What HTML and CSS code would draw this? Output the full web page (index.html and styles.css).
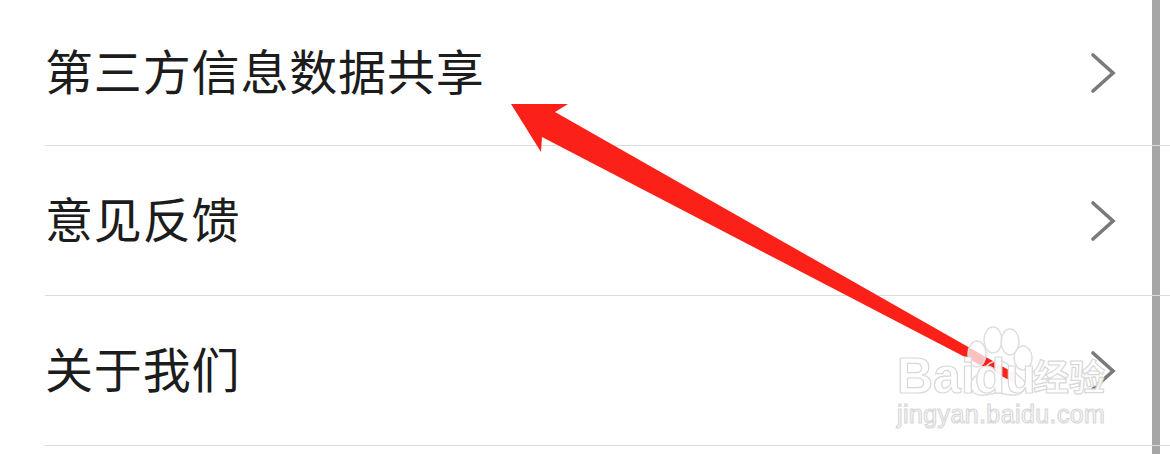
FILE: index.html
```html
<!DOCTYPE html>
<html lang="zh-CN">
<head>
<meta charset="utf-8">
<title>设置</title>
<link rel="stylesheet" href="styles.css">
</head>
<body>
<div class="page">
  <ul class="list">
    <li class="row row-first"><span class="label">第三方信息数据共享</span><svg class="chev" viewBox="0 0 30 44"><path d="M5 4 L25 22 L5 40"/></svg></li>
    <li class="row"><span class="label">意见反馈</span><svg class="chev" viewBox="0 0 30 44"><path d="M5 4 L25 22 L5 40"/></svg></li>
    <li class="row"><span class="label">关于我们</span><svg class="chev" viewBox="0 0 30 44"><path d="M5 4 L25 22 L5 40"/></svg></li>
  </ul>
  <div class="scrollbar"></div>
  <svg class="arrow" viewBox="0 0 1170 454"><polygon points="511,104 568,104 555,112 1014,373 1013,382 542,137 541,152"/></svg>
  <div class="watermark">
    <svg class="paw" viewBox="0 0 1170 454">
      <ellipse class="toe" cx="977" cy="354" rx="9" ry="13"/>
      <ellipse class="toe" cx="993" cy="340" rx="9" ry="13"/>
      <ellipse class="toe" cx="1010" cy="342" rx="9" ry="13"/>
      <ellipse class="toe" cx="1023" cy="358" rx="9" ry="12"/>
      <path class="pad" d="M998 361 C1010 361 1014 373 1021 378 C1029 384 1025 395 1013 395 C1005 395 1002 393 998 393 C992 393 988 396 979 395 C969 393 968 381 976 376 C984 372 986 361 998 361 Z"/>
    </svg>
    <span class="wm-baidu">Baidu</span>
    <span class="wm-cn">经验</span>
    <span class="wm-url">jingyan.baidu.com</span>
  </div>
</div>
</body>
</html>
```
FILE: styles.css
```css
* { box-sizing: border-box; }
html, body { margin: 0; padding: 0; background: #fff; }
.page {
  position: relative;
  width: 1170px;
  height: 454px;
  overflow: hidden;
  background: #fff;
  font-family: "Noto Sans CJK SC", "Liberation Sans", sans-serif;
}
.list {
  list-style: none;
  margin: 0 0 0 45px;
  padding: 0;
  position: relative;
  z-index: 2;
}
.row {
  height: 150px;
  padding: 0 52px 0 0;
  display: flex;
  align-items: center;
  justify-content: space-between;
  border-bottom: 1px solid #dcdcdc;
}
.row-first { height: 146px; }
.label {
  font-size: 48px;
  line-height: 60px;
  letter-spacing: 0.85px;
  color: #1c1c1c;
  margin-bottom: 8px;
}
.chev { width: 30px; height: 44px; flex: none; }
.chev path {
  fill: none;
  stroke: #7a7a7a;
  stroke-width: 3.6;
  stroke-linecap: round;
  stroke-linejoin: miter;
}
.scrollbar {
  position: absolute;
  left: 1152px;
  top: 0;
  width: 8px;
  height: 454px;
  background: #a6a6a6;
  z-index: 1;
}
.arrow, .paw {
  position: absolute;
  left: 0;
  top: 0;
  width: 1170px;
  height: 454px;
}
.arrow { z-index: 3; }
.arrow polygon { fill: #fb2119; }
.watermark {
  position: absolute;
  inset: 0;
  z-index: 4;
}
.paw ellipse, .paw path {
  stroke: #dedede;
  stroke-width: 1.5;
}
.paw .toe { fill: rgba(255, 255, 255, 0.72); }
.paw .pad { fill: none; }
.wm-baidu, .wm-cn, .wm-url {
  position: absolute;
  white-space: nowrap;
  color: rgba(255, 255, 255, 0.95);
  -webkit-text-stroke: 1.2px #d8d8d8;
}
.wm-baidu {
  left: 897px;
  top: 357px;
  font: bold 50px/38px "Liberation Sans", sans-serif;
}
.wm-cn {
  left: 1033px;
  top: 355px;
  font: bold 36px/40px "Noto Sans CJK SC", sans-serif;
}
.wm-url {
  left: 897px;
  top: 402px;
  font: 25px/24px "Liberation Sans", sans-serif;
  letter-spacing: 0.4px;
}
```
